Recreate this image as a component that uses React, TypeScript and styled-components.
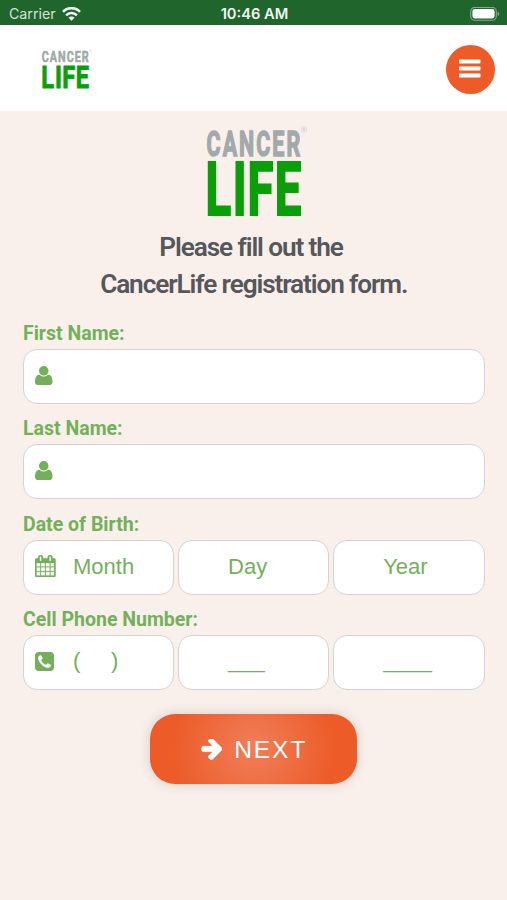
import React from "react";
import styled, { createGlobalStyle } from "styled-components";

const GlobalStyle = createGlobalStyle`
  * { box-sizing: border-box; }
  body { margin: 0; background: #f9f0eb; }
`;

const Page = styled.div`
  width: 100%;
  height: 900px;
  overflow: hidden;
  background: #f9f0eb;
  font-family: Roboto, sans-serif;
`;

const StatusBar = styled.div`
  display: grid;
  grid-template-columns: 1fr auto 1fr;
  align-items: center;
  height: 25px;
  padding: 3px 7px 0 9px;
  background: #1f652c;
  color: #f3f7f3;
  font: 400 14.2px/20px Inter, sans-serif;
`;

const Carrier = styled.div`
  display: flex;
  align-items: center;
  gap: 6px;
  color: #d5e3d6;
`;

const Clock = styled.div`
  font-weight: 600;
  font-size: 14.7px;
`;

const Battery = styled.svg`
  justify-self: end;
`;

const Header = styled.header`
  display: flex;
  justify-content: space-between;
  align-items: center;
  height: 86px;
  padding: 2px 12px 0 41.5px;
  background: #fff;
`;

const MenuButton = styled.button`
  display: grid;
  place-items: center;
  width: 49px;
  height: 49px;
  padding: 0 1px 2px 0;
  border: 0;
  border-radius: 50%;
  background: #ec5b28;
`;

const Main = styled.main`
  display: flex;
  flex-direction: column;
  padding: 17px 22.5px 0 23px;
`;

const LogoSvg = styled.svg`
  display: block;
  overflow: visible;
  font-family: Roboto, sans-serif;
  font-weight: 700;
`;

const HeroLogo = styled.div`
  align-self: center;
  height: 101px;
  margin-left: 7px;
`;

const Title = styled.h1`
  margin: 0;
  text-align: center;
  color: #55575b;
  font-weight: 600;
  font-size: 26.2px;
  line-height: 37px;
  letter-spacing: -1.1px;
`;

const Form = styled.form`
  display: flex;
  flex-direction: column;
  margin-top: 16px;
`;

const Field = styled.div`
  height: 95.4px;
`;

const Label = styled.label`
  display: block;
  height: 30px;
  color: #74b05b;
  font-weight: 700;
  font-size: 19.5px;
  line-height: 30px;
`;

const Inputs = styled.div`
  display: flex;
  gap: 3.7px;
`;

const Box = styled.div`
  display: flex;
  align-items: center;
  flex: 1;
  height: 55px;
  padding-left: 11px;
  border: 1.5px solid #d5d2d2;
  border-radius: 14px;
  background: #fff;
`;

const IconSlot = styled.span`
  display: flex;
  width: 38px;
  padding-bottom: 2px;
`;

const Value = styled.span<{ $raised: boolean }>`
  padding-bottom: ${(p) => (p.$raised ? 3 : 0)}px;
  color: #74b05b;
  font: 400 22px/30px "Liberation Sans", sans-serif;
  white-space: pre;
`;

const NextButton = styled.button`
  display: flex;
  align-items: center;
  justify-content: center;
  align-self: center;
  gap: 12px;
  width: 207px;
  height: 70px;
  margin-top: 13px;
  padding: 2px 0 0;
  border: 0;
  border-radius: 25px;
  color: #fff;
  background: radial-gradient(circle at 50% 50%, #f17e59 0, #ec5b28 82px);
  box-shadow: 0 0 12px rgba(80, 60, 50, 0.2);
  font: 400 24.6px/30px "Liberation Sans", sans-serif;
  letter-spacing: 1.9px;
`;

const Logo = ({ width, height }: { width: number; height: number }) => (
  <LogoSvg width={width} height={height} viewBox="0 0 100 88" preserveAspectRatio="none">
    <text transform="translate(-0.4 27.8) scale(0.6 1)" fontSize="35.8" fill="#a2a9aa" stroke="#a2a9aa" strokeWidth="1.5" textLength="156" lengthAdjust="spacing">CANCER</text>
    <text transform="translate(-1.4 87) scale(0.64 1)" x="0 42.5 65.5 108" fontSize="73.8" fill="#0a9f08" stroke="#0a9f08" strokeWidth="2.2">LIFE</text>
    <circle cx="97" cy="1.5" r="2.8" fill="none" stroke="#d6d3d1" strokeWidth="0.7" />
    <text x="95.5" y="3" fontSize="4" fill="#cbc8c7">R</text>
  </LogoSvg>
);

type IconKind = "user" | "calendar" | "phone" | "arrow";

const icons: Record<IconKind, { box: string; w: number; h: number; d: string }> = {
  user: {
    box: "192 128 1408 1536", w: 17.5, h: 19.2,
    d: "M1600 1405q0 120-73 189.5t-194 69.5h-874q-121 0-194-69.5t-73-189.5q0-53 3.5-103.5t14-109 26.5-108.5 43-97.5 62-81 85.5-53.5 111.5-20q9 0 42 21.5t74.5 48 108 48 133.5 21.5 133.5-21.5 108-48 74.5-48 42-21.5q61 0 111.5 20t85.5 53.5 62 81 43 97.5 26.5 108.5 14 109 3.5 103.5zm-320-893q0 159-112.5 271.5t-271.5 112.5-271.5-112.5-112.5-271.5 112.5-271.5 271.5-112.5 271.5 112.5 112.5 271.5z",
  },
  calendar: {
    box: "64 0 1664 1792", w: 20.7, h: 22.2,
    d: "M192 1664h288v-288h-288v288zm352 0h320v-288h-320v288zm-352-352h288v-320h-288v320zm352 0h320v-320h-320v320zm-352-384h288v-288h-288v288zm736 736h320v-288h-320v288zm-384-736h320v-288h-320v288zm768 736h288v-288h-288v288zm-384-352h320v-320h-320v320zm-352-864v-288q0-13-9.5-22.5t-22.5-9.5h-64q-13 0-22.5 9.5t-9.5 22.5v288q0 13 9.5 22.5t22.5 9.5h64q13 0 22.5-9.5t9.5-22.5zm736 864h288v-320h-288v320zm-384-384h320v-288h-320v288zm384 0h288v-288h-288v288zm32-480v-288q0-13-9.5-22.5t-22.5-9.5h-64q-13 0-22.5 9.5t-9.5 22.5v288q0 13 9.5 22.5t22.5 9.5h64q13 0 22.5-9.5t9.5-22.5zm384-64v1280q0 52-38 90t-90 38h-1408q-52 0-90-38t-38-90v-1280q0-52 38-90t90-38h128v-96q0-66 47-113t113-47h64q66 0 113 47t47 113v96h384v-96q0-66 47-113t113-47h64q66 0 113 47t47 113v96h128q52 0 90 38t38 90z",
  },
  phone: {
    box: "128 128 1536 1536", w: 19, h: 19,
    d: "M1408 1193q0-11-2-16t-18-16.5-40.5-25-47.5-26.5-45.5-25-28.5-15q-5-3-19-13t-25-15-21-5q-15 0-36.5 20.5t-39.5 45-38.5 45-33.5 20.5q-7 0-16.5-3.5t-15.5-6.5-17-9.5-14-8.5q-99-55-170-126.5t-127-170.5q-2-3-8.5-14t-9.5-17-6.5-15.5-3.5-16.5q0-13 20.5-33.5t45-38.5 45-39.5 20.5-36.5q0-10-5-21t-15-25-13-19q-3-6-15-28.5t-25-45.5-26.5-47.5-25-40.5-16.5-18-16-2q-48 0-101 22-46 21-80 94.5t-34 130.5q0 16 2.5 34t5 30.5 9 33 10 29.5 12.5 33 11 30q60 164 216.5 320.5t320.5 216.5q6 2 30 11t33 12.5 29.5 10 33 9 30.5 5 34 2.5q57 0 130.5-34t94.5-80q22-53 22-101zm256-777v960q0 119-84.5 203.5t-203.5 84.5h-960q-119 0-203.5-84.5t-84.5-203.5v-960q0-119 84.5-203.5t203.5-84.5h960q119 0 203.5 84.5t84.5 203.5z",
  },
  arrow: {
    box: "0 250 1600 1500", w: 22, h: 21,
    d: "M1600 960q0 54-37 91l-651 651q-39 37-91 37-51 0-90-37l-75-75q-38-38-38-91t38-91l293-293h-704q-52 0-84.5-37.5t-32.5-90.5v-128q0-53 32.5-90.5t84.5-37.5h704l-293-294q-38-36-38-90t38-90l75-75q38-38 90-38 53 0 91 38l651 651q37 35 37 90z",
  },
};

const Icon = ({ kind }: { kind: IconKind }) => {
  const icon = icons[kind];
  const color = kind === "arrow" ? "#fff" : "#74b05b";
  return (
    <svg width={icon.w} height={icon.h} viewBox={icon.box} fill={color}>
      <path d={icon.d} stroke={color} strokeWidth={kind === "calendar" ? 20 : kind === "arrow" ? 50 : 0} />
    </svg>
  );
};

const fields: { label: string; icon: IconKind; values: string[] }[] = [
  { label: "First Name:", icon: "user", values: [""] },
  { label: "Last Name:", icon: "user", values: [""] },
  { label: "Date of Birth:", icon: "calendar", values: ["Month", "Day", "Year"] },
  { label: "Cell Phone Number:", icon: "phone", values: ["(     )", "___", "____"] },
];

export default function App() {
  return (
    <Page>
      <GlobalStyle />
      <StatusBar>
        <Carrier>
          Carrier
          <svg width="19" height="14" viewBox="0 0 19 14" fill="none" stroke="#f3f7f3" strokeWidth="2.6">
            <path d="M1 4.8a12 12 0 0 1 17 0M4.1 8.3a7.6 7.6 0 0 1 10.8 0" />
            <path d="M9.5 13.7 6.5 10.8a4.2 4.2 0 0 1 6 0z" fill="#f3f7f3" stroke="none" />
          </svg>
        </Carrier>
        <Clock>10:46 AM</Clock>
        <Battery width="30" height="15" viewBox="0 0 30 15">
          <rect x="0.7" y="0.4" width="25.6" height="12.8" rx="4" fill="none" stroke="#87aa8c" strokeWidth="1.1" />
          <rect x="2.4" y="2.1" width="22.2" height="9.4" rx="2.4" fill="#fff" />
          <path d="M27.6 4.5v4.6q1.7-.7 1.7-2.3T27.6 4.5z" fill="#87aa8c" />
        </Battery>
      </StatusBar>
      <Header>
        <Logo width={50} height={38} />
        <MenuButton aria-label="Menu">
          <svg width="22" height="19" viewBox="0 0 22 19" fill="#fff">
            <rect y="0.5" width="21.5" height="4" rx="0.8" />
            <rect y="7.5" width="21.5" height="4" rx="0.8" />
            <rect y="14.5" width="21.5" height="4" rx="0.8" />
          </svg>
        </MenuButton>
      </Header>
      <Main>
        <HeroLogo>
          <Logo width={100} height={88} />
        </HeroLogo>
        <Title>
          Please fill out the&nbsp;
          <br />
          CancerLife registration form.
        </Title>
        <Form>
          {fields.map((field) => (
            <Field key={field.label}>
              <Label>{field.label}</Label>
              <Inputs>
                {field.values.map((value, i) => (
                  <Box key={i}>
                    <IconSlot>{i === 0 && <Icon kind={field.icon} />}</IconSlot>
                    <Value $raised={field.icon === "phone"}>{value}</Value>
                  </Box>
                ))}
              </Inputs>
            </Field>
          ))}
          <NextButton type="button">
            <Icon kind="arrow" />
            NEXT
          </NextButton>
        </Form>
      </Main>
    </Page>
  );
}
